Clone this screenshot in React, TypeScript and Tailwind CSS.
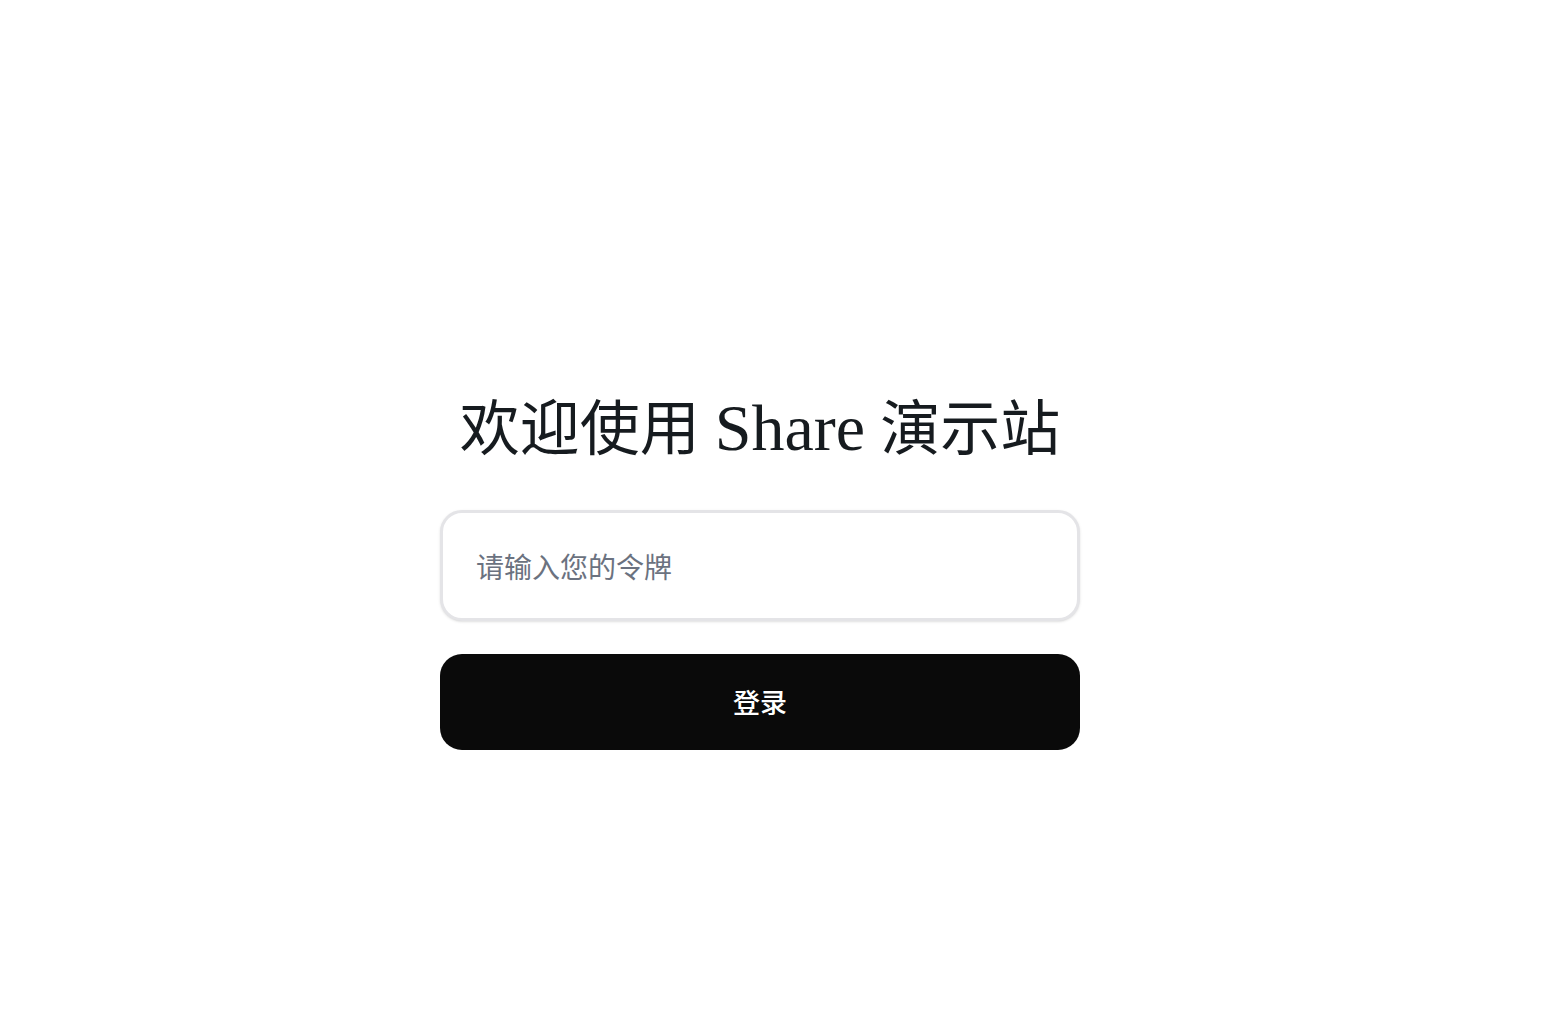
import { useState } from "react";

export default function App() {
  const [token, setToken] = useState("");

  return (
    <div className="min-h-screen w-full bg-white">
      <div className="flex w-[1520px] flex-col items-center pt-[388px]">
        <h1 className="h-[84px] text-[60px] leading-[84px] text-[#161b1f] [font-family:'Liberation_Serif','Noto_Sans_CJK_SC',serif]">
          欢迎使用 <span className="text-[66px] leading-none">Share</span> 演示站
        </h1>
        <form
          className="mt-[38px] flex w-[640px] flex-col gap-[33px]"
          onSubmit={(event) => event.preventDefault()}
        >
          <input
            value={token}
            onChange={(event) => setToken(event.currentTarget.value)}
            placeholder="请输入您的令牌"
            className="h-[111px] w-full rounded-[22px] border-[3px] border-[#e4e4e7] bg-white px-[33px] text-[28px] text-gray-900 shadow-sm outline-none placeholder:text-[#6b7280] [font-family:'Noto_Sans_CJK_SC',sans-serif]"
          />
          <button
            type="submit"
            className="h-[96px] w-full rounded-[22px] bg-[#0a0a0a] text-[27px] font-medium text-white [font-family:'Noto_Sans_CJK_SC',sans-serif]"
          >
            登录
          </button>
        </form>
      </div>
    </div>
  );
}
